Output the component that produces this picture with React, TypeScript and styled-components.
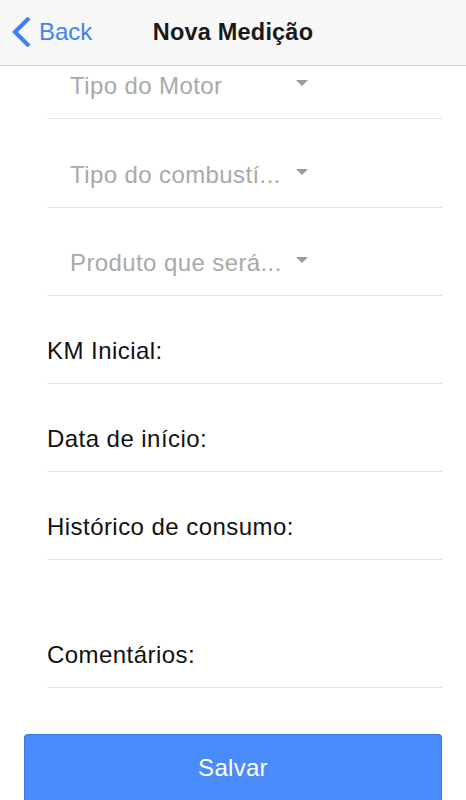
import React from "react";
import styled, { createGlobalStyle } from "styled-components";

const GlobalStyle = createGlobalStyle`
    html, body {
        margin: 0;
        padding: 0;
        background: #ffffff;
        font-family: "Liberation Sans", Arial, sans-serif;
        overflow: hidden;
    }
`;

const Screen = styled.div`
    width: 466px;
    height: 800px;
    display: flex;
    flex-direction: column;
    overflow: hidden;
`;

const NavBar = styled.div`
    height: 65px;
    flex-shrink: 0;
    background: #f7f7f7;
    border-bottom: 1px solid #cfcfcf;
    display: grid;
    grid-template-columns: 1fr auto 1fr;
    align-items: center;
`;

const BackButton = styled.div`
    display: flex;
    align-items: center;
    gap: 8px;
    padding-left: 11px;
    color: #3e83f0;
    font-size: 24px;
    padding-bottom: 1px;
`;

const Title = styled.div`
    font-size: 23.5px;
    font-weight: 700;
    color: #1a1a1a;
    letter-spacing: 0.2px;
    padding-bottom: 1px;
`;

const Form = styled.div`
    display: flex;
    flex-direction: column;
    padding: 0 24px 0 47px;
`;

const Row = styled.div<{ $height: number }>`
    height: ${(p) => p.$height}px;
    box-sizing: border-box;
    border-bottom: 1px solid #e3e3e3;
    display: flex;
    align-items: flex-end;
    padding-bottom: 18px;
`;

const Picker = styled.div`
    width: 238px;
    margin-left: 23px;
    display: flex;
    align-items: center;
    justify-content: space-between;
    color: #a9a9a9;
    font-size: 24px;
    line-height: 28px;
    letter-spacing: 0.4px;
`;

const Caret = styled.span`
    width: 0;
    height: 0;
    border-left: 6.5px solid transparent;
    border-right: 6.5px solid transparent;
    border-top: 6px solid #9c9c9c;
    margin-bottom: 6px;
`;

const Label = styled.div`
    font-size: 24px;
    line-height: 28px;
    color: #111;
    letter-spacing: 0.45px;
`;

const SaveButton = styled.div`
    margin: 46px 24px 0 24px;
    height: 72px;
    flex-shrink: 0;
    box-sizing: border-box;
    background: #4a8bfc;
    border: 1px solid #3a7ae6;
    border-bottom: 3px solid #3a72d4;
    border-radius: 4px;
    color: #fff;
    font-size: 24px;
    letter-spacing: 0.3px;
    display: flex;
    justify-content: center;
    padding-top: 19px;
`;

const ChevronLeft = () => (
    <svg width="20" height="30" viewBox="0 0 20 30">
        <path d="M16.5 2.5 L4 15 L16.5 27.5" fill="none" stroke="#3e83f0" strokeWidth="4.2" strokeLinecap="square" />
    </svg>
);

const pickers = [
    { text: "Tipo do Motor", height: 53 },
    { text: "Tipo do combustí...", height: 89 },
    { text: "Produto que será...", height: 88 },
];

const fields = [
    { text: "KM Inicial:", height: 88 },
    { text: "Data de início:", height: 88 },
    { text: "Histórico de consumo:", height: 88 },
    { text: "Comentários:", height: 128 },
];

const App = () => {
    return (
        <Screen>
            <GlobalStyle />
            <NavBar>
                <BackButton>
                    <ChevronLeft />
                    <span>Back</span>
                </BackButton>
                <Title>Nova Medição</Title>
                <div />
            </NavBar>
            <Form>
                {pickers.map((p) => (
                    <Row key={p.text} $height={p.height}>
                        <Picker>
                            <span>{p.text}</span>
                            <Caret />
                        </Picker>
                    </Row>
                ))}
                {fields.map((f) => (
                    <Row key={f.text} $height={f.height}>
                        <Label>{f.text}</Label>
                    </Row>
                ))}
            </Form>
            <SaveButton>Salvar</SaveButton>
        </Screen>
    );
};

export default App;
